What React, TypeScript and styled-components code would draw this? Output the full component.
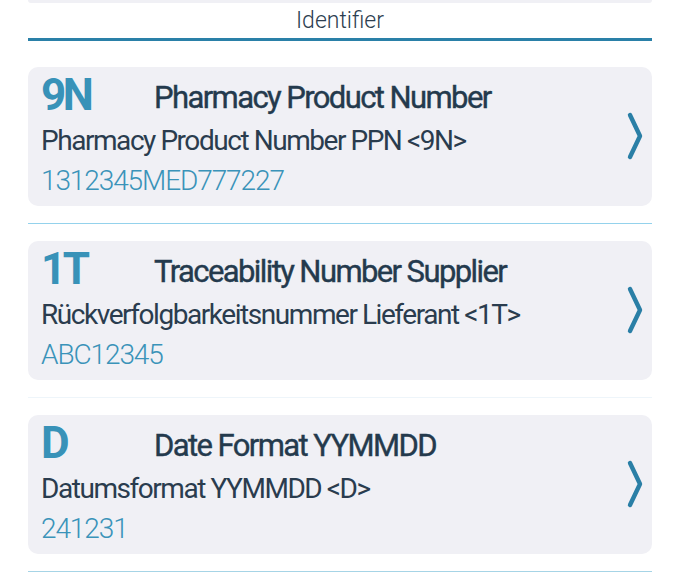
import React from 'react';
import styled, {createGlobalStyle} from "styled-components";

const items = [
    {code: "9N", title: "Pharmacy Product Number", desc: "Pharmacy Product Number PPN <9N>", value: "1312345MED777227", line: "#94d2ec"},
    {code: "1T", title: "Traceability Number Supplier", desc: "Rückverfolgbarkeitsnummer Lieferant <1T>", value: "ABC12345", line: "#eef5fa"},
    {code: "D", title: "Date Format YYMMDD", desc: "Datumsformat YYMMDD <D>", value: "241231", line: "#a6d4e6"},
];

const Chevron = () => (
    <svg width="16" height="48" viewBox="0 0 16 48">
        <polyline points="3,3 13,24 3,45" fill="none" stroke="#2a7fa6" strokeWidth="4.4" strokeLinecap="round" strokeLinejoin="round"/>
    </svg>
);

const App = () => {
    return (
        <>
            <GlobalStyle/>
            <Page>
                <PrevCard/>
                <SectionTitle>Identifier</SectionTitle>
                <List>
                    {items.map(item => (
                        <Entry key={item.code} $line={item.line}>
                            <Card>
                                <Texts>
                                    <HeadRow>
                                        <Code>{item.code}</Code>
                                        <Title>{item.title}</Title>
                                    </HeadRow>
                                    <Desc>{item.desc}</Desc>
                                    <Value>{item.value}</Value>
                                </Texts>
                                <Chevron/>
                            </Card>
                        </Entry>
                    ))}
                </List>
            </Page>
        </>
    );
};

const GlobalStyle = createGlobalStyle`
    body {
        margin: 0;
        background: #ffffff;
        font-family: Roboto, "Liberation Sans", sans-serif;
        overflow: hidden;
    }
`

const Page = styled.div`
    width: 680px;
    height: 578px;
    box-sizing: border-box;
    padding: 0 28px;
    background: white;
`

const PrevCard = styled.div`
    height: 3px;
    background: #f0f0f5;
    border-bottom-left-radius: 10px;
    border-bottom-right-radius: 10px;
`

const SectionTitle = styled.div`
    height: 34px;
    line-height: 34px;
    padding-top: 1px;
    text-align: center;
    font-size: 23px;
    font-weight: 300;
    color: #2c3e50;
    border-bottom: 3px solid #2a80a8;
    box-sizing: content-box;
`

const List = styled.div`
    display: flex;
    flex-direction: column;
`

const Entry = styled.div<{ $line: string }>`
    padding: 26px 0 17px;
    border-bottom: 1px solid ${p => p.$line};
    & + & {
        padding-top: 17px;
    }
`

const Card = styled.div`
    height: 139px;
    box-sizing: border-box;
    padding: 2px 9px 3px 13px;
    background: #f0f0f5;
    border-radius: 10px;
    display: flex;
    align-items: center;
`

const Texts = styled.div`
    flex: 1;
    display: flex;
    flex-direction: column;
    align-self: stretch;
`

const HeadRow = styled.div`
    display: flex;
    align-items: baseline;
    line-height: 52px;
    height: 52px;
`

const Code = styled.span`
    width: 113px;
    flex-shrink: 0;
    font-size: 44px;
    font-weight: 700;
    color: #3892b8;
    letter-spacing: -3.5px;
`

const Title = styled.span`
    position: relative;
    top: -2px;
    font-size: 31px;
    font-weight: 400;
    color: #243a4d;
    letter-spacing: -1.6px;
    -webkit-text-stroke: 0.4px #243a4d;
`

const Desc = styled.div`
    font-size: 28px;
    line-height: 40px;
    color: #2a3c4e;
    letter-spacing: -1.45px;
`

const Value = styled.div`
    font-size: 28px;
    line-height: 40px;
    font-weight: 300;
    color: #3a93b9;
    letter-spacing: -1.1px;
`

export default App;
